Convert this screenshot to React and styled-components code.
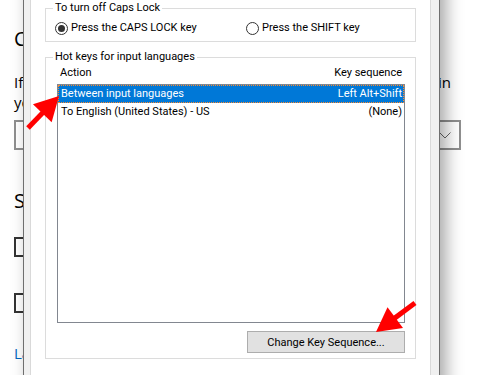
import React from 'react';
import styled, { createGlobalStyle } from 'styled-components';

const GlobalStyle = createGlobalStyle`
  html, body { margin: 0; padding: 0; background: #ffffff; }
  body { overflow: hidden; }
`;

const Screen = styled.div`
  position: relative;
  width: 480px;
  height: 375px;
  overflow: hidden;
  background: #ffffff;
`;

/* ---------- background settings page ---------- */
const SettingsPage = styled.div`
  display: flex;
  flex-direction: column;
  align-items: flex-start;
  width: 447px;
  padding-left: 14px;
  font-family: "Open Sans", Roboto, sans-serif;
  color: #000;
`;

const PageHeading = styled.h2`
  margin: ${p => p.$top}px 0 0 0;
  font-size: 20px;
  line-height: 28px;
  font-weight: 400;
  white-space: nowrap;
`;

const Para = styled.div`
  margin-top: ${p => p.$top}px;
  width: 437px;
  font-size: 15px;
  line-height: 20px;
`;

const ParaLine = styled.div`
  white-space: nowrap;
  text-align: ${p => (p.$justify ? 'justify' : 'left')};
  text-align-last: ${p => (p.$justify ? 'justify' : 'left')};
`;

const Dropdown = styled.div`
  margin-top: 8px;
  box-sizing: border-box;
  width: 447px;
  height: 30px;
  border: 2px solid #8f8f8f;
  display: flex;
  align-items: center;
  justify-content: flex-end;
  padding-right: 8px;
`;

const CheckBox = styled.div`
  margin-top: ${p => p.$top}px;
  box-sizing: border-box;
  width: 20px;
  height: 20px;
  border: 2px solid #333;
`;

const PageLink = styled.div`
  margin-top: ${p => p.$top}px;
  font-size: 15px;
  line-height: 20px;
  color: #0067c0;
  white-space: nowrap;
`;

/* ---------- dialog window ---------- */
const Dialog = styled.div`
  position: absolute;
  left: 23px;
  top: -50px;
  width: 417px;
  height: 470px;
  box-sizing: border-box;
  background: #f0f0f0;
  border: 1px solid #6e6e6e;
  box-shadow: 6px 6px 16px rgba(0, 0, 0, 0.35);
  padding: 20px 8px 0 6px;
  font-family: Roboto, "Liberation Sans", sans-serif;
  font-size: 11px;
  color: #000;
`;

const TabPage = styled.div`
  box-sizing: border-box;
  height: 100%;
  background: #ffffff;
  border: 1px solid #d9d9d9;
  padding: 28px 14px 0 14px;
  display: flex;
  flex-direction: column;
`;

const Group = styled.fieldset`
  margin: ${p => p.$top}px 0 0 0;
  padding: 0;
  min-width: 0;
  border: 1px solid #dcdcdc;
`;

const Legend = styled.legend`
  margin-left: 7px;
  padding: 0 2px;
  line-height: 16px;
`;

const RadioRow = styled.div`
  display: grid;
  grid-template-columns: 191px 1fr;
  padding: 4px 0 5px 9px;
`;

const RadioOption = styled.label`
  display: flex;
  align-items: center;
  gap: 3px;
  height: 16px;
  line-height: 16px;
  white-space: nowrap;
`;

const RadioCircle = styled.span`
  position: relative;
  box-sizing: border-box;
  width: 13px;
  height: 13px;
  border-radius: 50%;
  border: 1px solid #333;
  background: #fff;
  flex: none;
  &::after {
    content: '';
    display: ${p => (p.$checked ? 'block' : 'none')};
    position: absolute;
    left: 2px;
    top: 2px;
    width: 7px;
    height: 7px;
    border-radius: 50%;
    background: #333;
  }
`;

const HotkeyBody = styled.div`
  display: flex;
  flex-direction: column;
  padding: 0 10px 5px 11px;
`;

const HeaderRow = styled.div`
  display: flex;
  justify-content: space-between;
  padding: 0 3px;
  line-height: 16px;
  margin-bottom: 3px;
`;

const ListBox = styled.div`
  box-sizing: border-box;
  height: 239px;
  border: 1px solid #828790;
  background: #fff;
  display: flex;
  flex-direction: column;
`;

const ListRow = styled.div`
  display: flex;
  justify-content: space-between;
  height: 18px;
  line-height: 18px;
  padding: 0 2px 0 3px;
  background: ${p => (p.$selected ? '#0078d7' : 'transparent')};
  color: ${p => (p.$selected ? '#ffffff' : '#000000')};
  outline: ${p => (p.$selected ? '1px dotted #ff8a2c' : 'none')};
  outline-offset: -1px;
`;

const Button = styled.button`
  align-self: flex-end;
  margin-top: 8px;
  width: 158px;
  height: 22px;
  box-sizing: border-box;
  background: #e1e1e1;
  border: 1px solid #adadad;
  font-family: inherit;
  font-size: 11px;
  color: #000;
  padding: 0;
`;

const ArrowLayer = styled.svg`
  position: absolute;
  left: 0;
  top: 0;
  pointer-events: none;
`;

function Arrow({ tail, tip }) {
  const dx = tip[0] - tail[0];
  const dy = tip[1] - tail[1];
  const len = Math.hypot(dx, dy);
  const ux = dx / len;
  const uy = dy / len;
  const px = -uy;
  const py = ux;
  const L = 24;
  const W = 13;
  const bx = tip[0] - L * ux;
  const by = tip[1] - L * uy;
  const pts = [
    [tip[0], tip[1]],
    [bx + W * px, by + W * py],
    [bx - W * px, by - W * py],
  ]
    .map(p => p.join(','))
    .join(' ');
  return (
    <g>
      <line x1={tail[0]} y1={tail[1]} x2={bx + 2 * ux} y2={by + 2 * uy} stroke="#ff0000" strokeWidth="5" />
      <polygon points={pts} fill="#ff0000" />
    </g>
  );
}

export default function App() {
  return (
    <Screen>
      <GlobalStyle />
      <SettingsPage>
        <PageHeading $top={25}>Choose an input method</PageHeading>
        <Para $top={19}>
          <ParaLine $justify>If you want a different method for each app, set it in</ParaLine>
          <ParaLine>your language list.</ParaLine>
        </Para>
        <Dropdown>
          <svg width="12" height="7" viewBox="0 0 12 7">
            <polyline points="0.5,0.5 6,6 11.5,0.5" fill="none" stroke="#666" strokeWidth="1" />
          </svg>
        </Dropdown>
        <PageHeading $top={37}>Switching input methods</PageHeading>
        <CheckBox $top={22} />
        <CheckBox $top={36} />
        <PageLink $top={30}>Language bar</PageLink>
      </SettingsPage>

      <Dialog>
        <TabPage>
          <Group $top={0}>
            <Legend>To turn off Caps Lock</Legend>
            <RadioRow>
              <RadioOption>
                <RadioCircle $checked />
                Press the CAPS LOCK key
              </RadioOption>
              <RadioOption>
                <RadioCircle />
                Press the SHIFT key
              </RadioOption>
            </RadioRow>
          </Group>
          <Group $top={7}>
            <Legend>Hot keys for input languages</Legend>
            <HotkeyBody>
              <HeaderRow>
                <span>Action</span>
                <span>Key sequence</span>
              </HeaderRow>
              <ListBox>
                <ListRow $selected>
                  <span>Between input languages</span>
                  <span>Left Alt+Shift</span>
                </ListRow>
                <ListRow>
                  <span>To English (United States) - US</span>
                  <span>(None)</span>
                </ListRow>
              </ListBox>
              <Button>Change Key Sequence...</Button>
            </HotkeyBody>
          </Group>
        </TabPage>
      </Dialog>

      <ArrowLayer width="480" height="375" viewBox="0 0 480 375">
        <Arrow tail={[28, 128]} tip={[59, 96]} />
        <Arrow tail={[415, 303]} tip={[376, 332]} />
      </ArrowLayer>
    </Screen>
  );
}
